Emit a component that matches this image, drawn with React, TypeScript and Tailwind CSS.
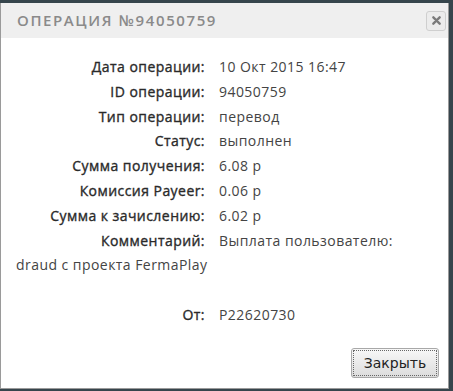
import React from "react";

const rows: [string, string][] = [
  ["Дата операции:", "10 Окт 2015 16:47"],
  ["ID операции:", "94050759"],
  ["Тип операции:", "перевод"],
  ["Статус:", "выполнен"],
  ["Сумма получения:", "6.08 р"],
  ["Комиссия Payeer:", "0.06 р"],
  ["Сумма к зачислению:", "6.02 р"],
];

const labelCls =
  "inline-block w-[189px] text-right mr-[14px] text-[#2a2a2a] [-webkit-text-stroke:0.35px_#2a2a2a]";

export default function App() {
  return (
    <div className="h-[391px] w-[453px] bg-[#36454c] pt-[3px] pr-[4px] pb-[2px] overflow-hidden">
      <div className="h-full bg-white border border-t-0 border-[#9a9a9a] flex flex-col">
        <div className="h-[35px] shrink-0 bg-[#efefef] flex items-center justify-between pl-[16px] pr-[2px]">
          <span
            className="text-[15px] font-semibold tracking-[1.6px] text-[#8a8a8a] uppercase"
            style={{ fontFamily: '"Open Sans", sans-serif' }}
          >
            Операция №94050759
          </span>
          <button className="w-[20px] h-[20px] rounded-[3px] border border-[#cfcfcf] bg-[#ececec] flex items-center justify-center">
            <svg width="9" height="9" viewBox="0 0 10 10">
              <path d="M1.5 1.5 L8.5 8.5 M8.5 1.5 L1.5 8.5" stroke="#7b7b7b" strokeWidth="2.6" strokeLinecap="round" />
            </svg>
          </button>
        </div>

        <div
          className="flex-1 pt-[17px] pl-[15px] pr-[15px] text-[14px] leading-[24.8px] tracking-[0.45px] text-[#444]"
          style={{ fontFamily: '"Open Sans", sans-serif' }}
        >
          {rows.map(([k, v]) => (
            <div key={k}>
              <span className={labelCls}>{k}</span>
              <span>{v}</span>
            </div>
          ))}
          <div>
            <span className={labelCls}>Комментарий:</span>
            Выплата пользователю:
            <br />
            draud с проекта FermaPlay
          </div>
          <div className="h-[24.8px]" />
          <div>
            <span className={labelCls}>От:</span>
            <span>P22620730</span>
          </div>
        </div>

        <div className="shrink-0 flex justify-end pr-[9px] pb-[10px]">
          <button
            className="w-[88px] h-[30px] rounded-[3px] border border-[#a8a8a8] bg-linear-to-b from-[#f8f8f8] to-[#dcdcdc] text-[14px] text-[#222] outline-1 outline-dotted outline-[#666] outline-offset-[-3px]"
            style={{ fontFamily: '"DejaVu Sans", sans-serif' }}
          >
            Закрыть
          </button>
        </div>
      </div>
    </div>
  );
}
